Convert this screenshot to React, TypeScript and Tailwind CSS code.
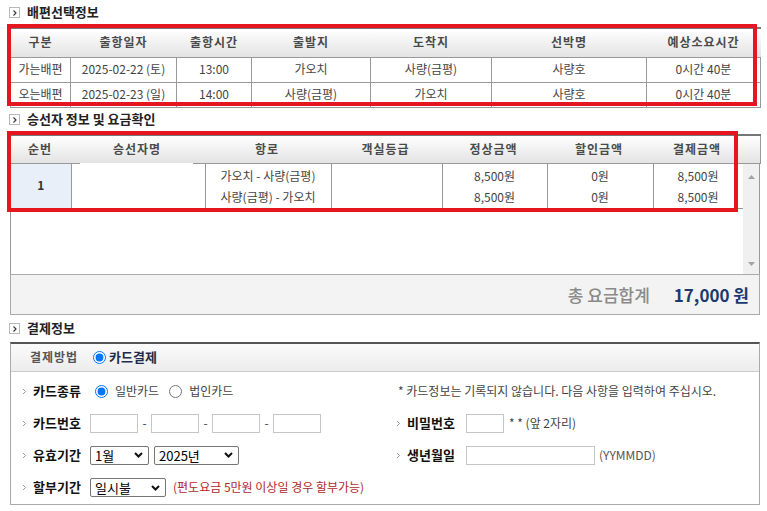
import React from "react"

type Leg = {
  kind: string
  date: string
  time: string
  from: string
  to: string
  ship: string
  duration: string
}

const legs: Leg[] = [
  { kind: "가는배편", date: "2025-02-22 (토)", time: "13:00", from: "가오치", to: "사량(금평)", ship: "사량호", duration: "0시간 40분" },
  { kind: "오는배편", date: "2025-02-23 (일)", time: "14:00", from: "사량(금평)", to: "가오치", ship: "사량호", duration: "0시간 40분" },
]

const legCols = ["w-[60px]", "w-[106px]", "w-[75px]", "w-[119px]", "w-[121px]", "w-[155px]", "w-[114px]"]
const legHeads = ["구분", "출항일자", "출항시간", "출발지", "도착지", "선박명", "예상소요시간"]

const fareCols = ["w-[60px]", "w-[134px]", "w-[126px]", "w-[111px]", "w-[105px]", "w-[106px]", "w-[90px]"]
const fareHeads = ["순번", "승선자명", "항로", "객실등급", "정상금액", "할인금액", "결제금액"]

const th =
  "h-[29px] border-t-2 border-t-[#777] border-b border-b-[#999] bg-linear-to-b from-white to-[#e3e3e3] text-center text-[12px] font-bold tracking-[1px] text-[#4a4a4a]"
const td = "border border-[#999] text-center text-[12px] text-[#444]"

function SectionTitle({ children }: { children: React.ReactNode }) {
  return (
    <div className="flex items-center gap-[7px] pl-[9px]">
      <span className="flex h-[11px] w-[11px] items-center justify-center border border-[#b8b8b8] bg-white">
        <svg width="4" height="6" viewBox="0 0 4 6">
          <path d="M0.5 0.5 L3 3 L0.5 5.5" fill="none" stroke="#333" strokeWidth="1.1" />
        </svg>
      </span>
      <span className="text-[13px] font-bold text-[#222]">{children}</span>
    </div>
  )
}

// 빨간 강조 박스 (스크린샷 위의 표시)
function RedMark({ className }: { className: string }) {
  return <div className={`pointer-events-none absolute border-[4px] border-[#e5161f] ${className}`} />
}

function Arrow() {
  return (
    <svg width="5" height="7" viewBox="0 0 5 7" className="shrink-0">
      <path d="M1 1 L3.5 3.5 L1 6" fill="none" stroke="#9a9a9a" strokeWidth="1" />
    </svg>
  )
}

function FakeSelect({ value, width }: { value: string; width: string }) {
  return (
    <div className={`flex h-[19px] ${width} items-center justify-between rounded-[2px] border border-[#767676] bg-white pl-[4px] pr-[5px]`}>
      <span className="text-[13px] leading-none text-black">{value}</span>
      <svg width="9" height="6" viewBox="0 0 9 6">
        <path d="M1 1 L4.5 4.5 L8 1" fill="none" stroke="#111" strokeWidth="2" />
      </svg>
    </div>
  )
}

function Label({ children, width }: { children: React.ReactNode; width: string }) {
  return (
    <div className={`flex items-center ${width}`}>
      <Arrow />
      <span className="ml-[6px] text-[13px] font-bold text-[#111]">{children}</span>
    </div>
  )
}

const box = "h-[19px] border border-[#c6c6c6] bg-white"

export default function App() {
  return (
    <div className="w-[767px] bg-white pb-[4px] font-['Noto_Sans_CJK_KR','Noto_Sans',sans-serif] text-[12px] leading-[1.4] text-[#444]">
      {/* 배편선택정보 */}
      <div className="flex h-[25px] items-center">
        <SectionTitle>배편선택정보</SectionTitle>
      </div>
      <div className="relative ml-[10px] mt-[2px] w-[750px]">
        <table className="w-full table-fixed border-collapse">
          <colgroup>
            {legCols.map((c, i) => (
              <col key={i} className={c} />
            ))}
          </colgroup>
          <thead>
            <tr>
              {legHeads.map((h) => (
                <th key={h} className={th}>
                  {h}
                </th>
              ))}
            </tr>
          </thead>
          <tbody>
            {legs.map((l) => (
              <tr key={l.kind} className="h-[25px]">
                <td className={td}>{l.kind}</td>
                <td className={td}>{l.date}</td>
                <td className={td}>{l.time}</td>
                <td className={td}>{l.from}</td>
                <td className={td}>{l.to}</td>
                <td className={td}>{l.ship}</td>
                <td className={td}>{l.duration}</td>
              </tr>
            ))}
          </tbody>
        </table>
        <RedMark className="left-[-3px] top-[-3px] h-[82px] w-[750px]" />
      </div>

      {/* 승선자 정보 및 요금확인 */}
      <div className="flex h-[24px] items-center">
        <SectionTitle>승선자 정보 및 요금확인</SectionTitle>
      </div>
      <div className="relative ml-[10px] mt-[2px] w-[750px]">
        <table className="w-full table-fixed border-collapse">
          <colgroup>
            {fareCols.map((c, i) => (
              <col key={i} className={c} />
            ))}
            <col className="w-[18px]" />
          </colgroup>
          <thead>
            <tr>
              {fareHeads.map((h) => (
                <th key={h} className={th}>
                  {h}
                </th>
              ))}
              <th className={`${th} border-r border-r-[#999]`} />
            </tr>
          </thead>
        </table>
        <div className="flex h-[110px] border-l border-[#999]">
          <div className="w-[732px]">
            <table className="w-full table-fixed border-collapse">
              <colgroup>
                {fareCols.map((c, i) => (
                  <col key={i} className={c} />
                ))}
              </colgroup>
              <tbody>
                <tr className="h-[44px]">
                  <td className="border-r border-b border-[#999] bg-[#e8eff8] text-center text-[12px] font-bold text-[#333]">1</td>
                  <td className="relative border-r border-b border-[#999]">
                    <div className="absolute bottom-[-1px] left-[8px] right-[12px] top-[-1px] bg-white" />
                  </td>
                  <td className="border-r border-b border-[#999] text-center leading-[21px]">
                    <div>가오치 - 사량(금평)</div>
                    <div>사량(금평) - 가오치</div>
                  </td>
                  <td className="border-r border-b border-[#999]" />
                  {["8,500원", "0원", "8,500원"].map((v, i) => (
                    <td key={i} className="border-r border-b border-[#999] text-center leading-[21px]">
                      <div>{v}</div>
                      <div>{v}</div>
                    </td>
                  ))}
                </tr>
              </tbody>
            </table>
          </div>
          <div className="flex w-[18px] flex-col items-center justify-between border-r border-[#999] bg-[#f0f0f0] pb-[8px] pt-[11px]">
            <svg width="7" height="4" viewBox="0 0 7 4">
              <path d="M0 4 L3.5 0 L7 4 Z" fill="#a3a3a3" />
            </svg>
            <svg width="7" height="4" viewBox="0 0 7 4">
              <path d="M0 0 L3.5 4 L7 0 Z" fill="#a3a3a3" />
            </svg>
          </div>
        </div>
        <div className="flex h-[41px] items-center justify-end gap-[24px] border border-[#aaa] bg-[#f3f3f3] pr-[10px]">
          <span className="text-[17px] font-medium text-[#8a8a8a]">총 요금합계</span>
          <span className="text-[17px] font-bold text-[#1c3a6e]">17,000 원</span>
        </div>
        <RedMark className="left-[-3px] top-[-3px] h-[81px] w-[731px]" />
      </div>

      {/* 결제정보 */}
      <div className="flex h-[27px] items-center">
        <SectionTitle>결제정보</SectionTitle>
      </div>
      <div className="ml-[10px] w-[750px] border-x border-b border-t-2 border-[#aaa] border-t-[#555]">
        <div className="flex h-[28px] items-center border-b border-[#ccc] bg-linear-to-b from-[#fbfbfb] to-[#ececec] pl-[19px]">
          <span className="w-[58px] text-[12px] font-bold tracking-[1px] text-[#555]">결제방법</span>
          <input type="radio" defaultChecked name="pay" className="m-0 ml-[5px] h-[13px] w-[13px]" />
          <span className="ml-[3px] text-[13px] font-bold text-[#1f2b4a]">카드결제</span>
        </div>

        <div className="pt-[3px]">
          {/* 카드종류 */}
          <div className="flex h-[32px] items-center pl-[11px]">
            <div className="flex w-[374px] items-center">
              <Label width="w-[68px]">카드종류</Label>
              <input type="radio" defaultChecked name="kind" className="m-0 ml-[5px] h-[13px] w-[13px]" />
              <span className="ml-[7px]">일반카드</span>
              <input type="radio" name="kind" className="m-0 ml-[10px] h-[13px] w-[13px]" />
              <span className="ml-[7px]">법인카드</span>
            </div>
            <span className="ml-[2px] text-[#444]">* 카드정보는 기록되지 않습니다. 다음 사항을 입력하여 주십시오.</span>
          </div>

          {/* 카드번호 / 비밀번호 */}
          <div className="flex h-[32px] items-center pl-[11px]">
            <div className="flex w-[374px] items-center">
              <Label width="w-[68px]">카드번호</Label>
              {[0, 1, 2, 3].map((i) => (
                <React.Fragment key={i}>
                  <input type="text" className={`${box} w-[48px]`} />
                  {i < 3 && <span className="w-[13px] text-center text-[#444]">-</span>}
                </React.Fragment>
              ))}
            </div>
            <Label width="w-[70px]">비밀번호</Label>
            <input type="text" className={`${box} w-[38px]`} />
            <span className="ml-[5px] text-[#444]">* * (앞 2자리)</span>
          </div>

          {/* 유효기간 / 생년월일 */}
          <div className="flex h-[32px] items-center pl-[11px]">
            <div className="flex w-[374px] items-center">
              <Label width="w-[68px]">유효기간</Label>
              <FakeSelect value="1월" width="w-[59px]" />
              <div className="ml-[5px]">
                <FakeSelect value="2025년" width="w-[85px]" />
              </div>
            </div>
            <Label width="w-[70px]">생년월일</Label>
            <input type="text" className={`${box} w-[129px]`} />
            <span className="ml-[4px] text-[#555]">(YYMMDD)</span>
          </div>

          {/* 할부기간 */}
          <div className="flex h-[33px] items-center pl-[11px]">
            <Label width="w-[68px]">할부기간</Label>
            <FakeSelect value="일시불" width="w-[76px]" />
            <span className="ml-[7px] text-[#b0282c]">(편도요금 5만원 이상일 경우 할부가능)</span>
          </div>
        </div>
      </div>
    </div>
  )
}
